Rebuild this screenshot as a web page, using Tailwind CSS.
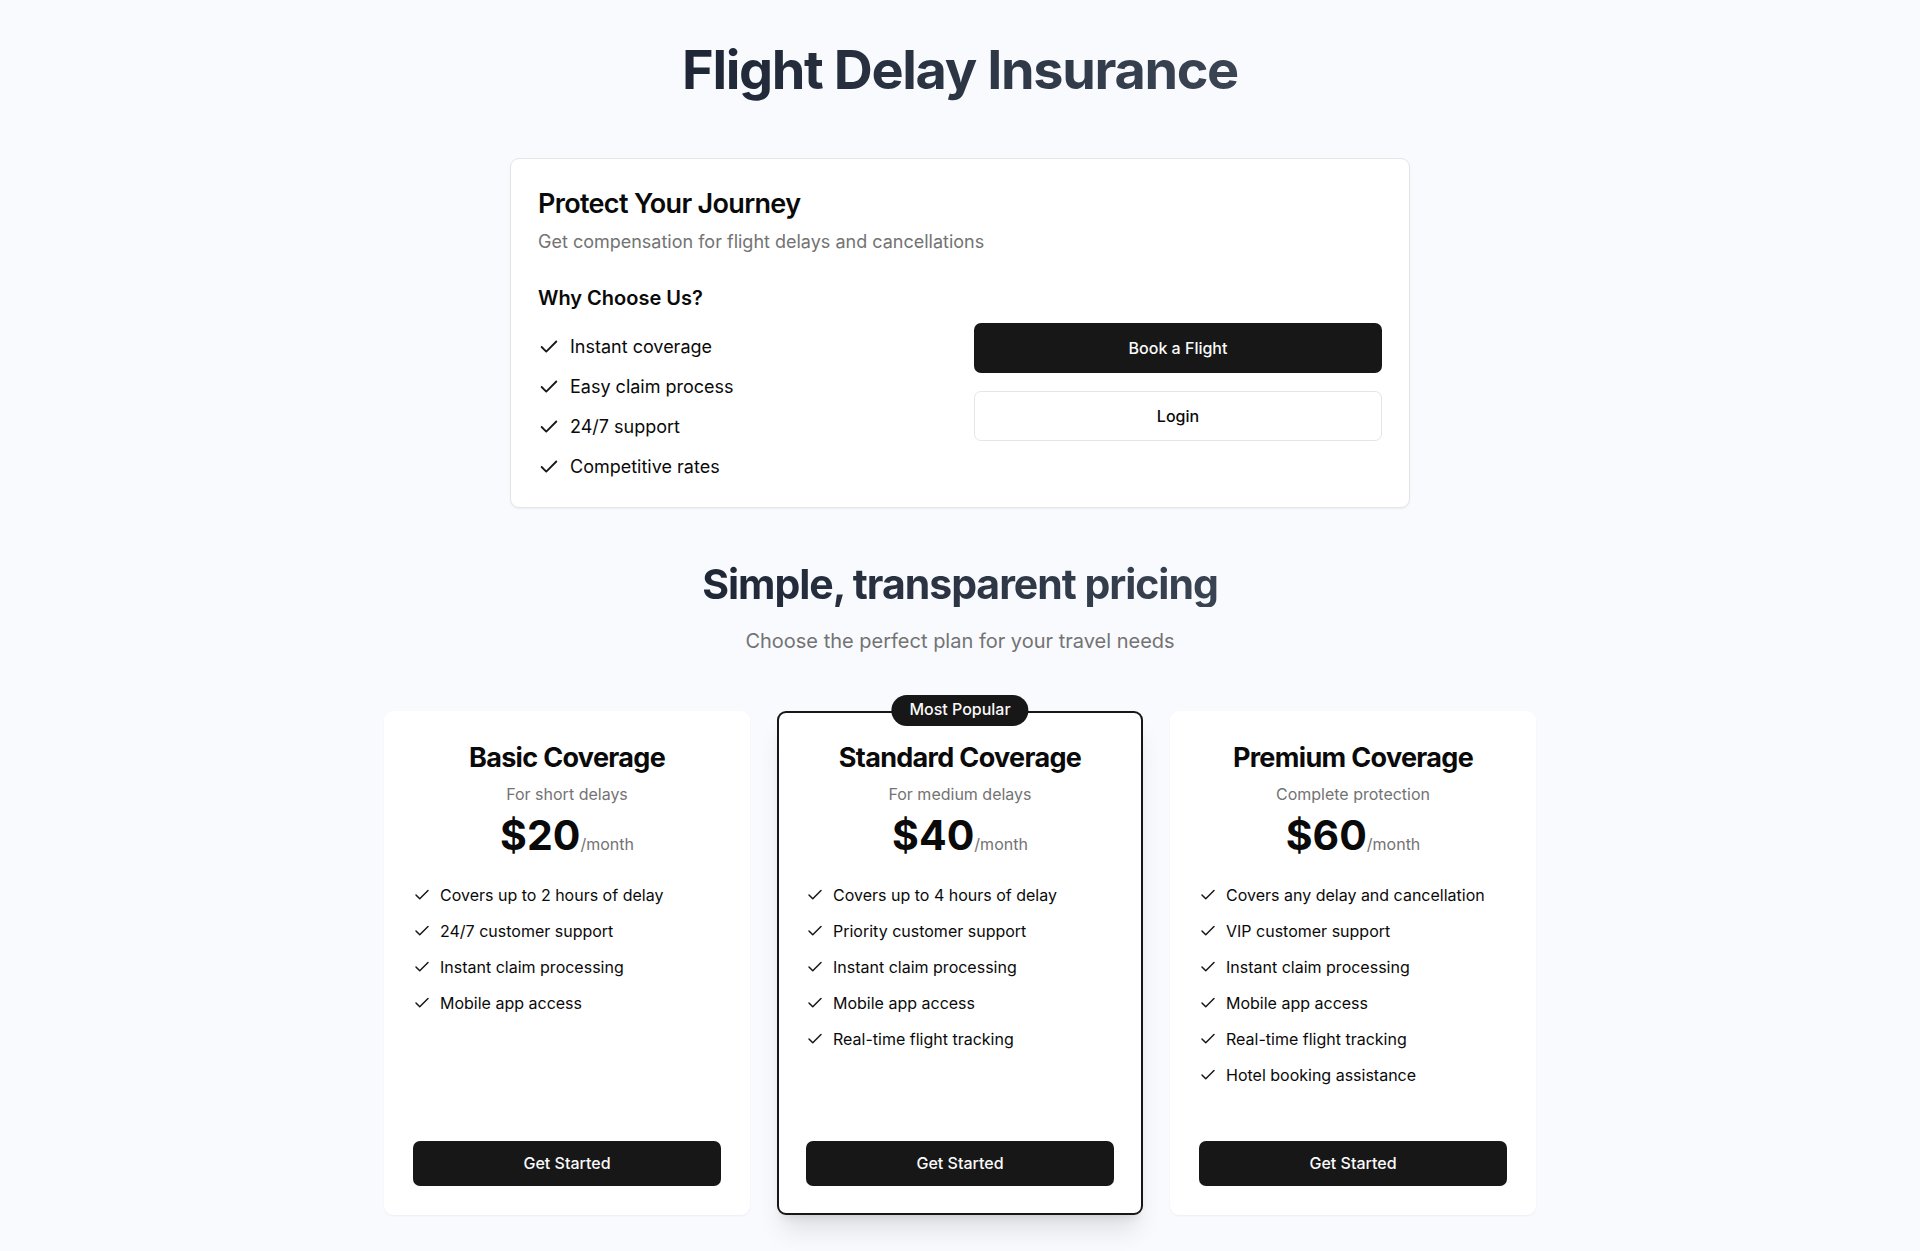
<!DOCTYPE html>
<html lang="en">
<head>
<meta charset="utf-8">
<meta name="viewport" content="width=device-width, initial-scale=1">
<title>Flight Delay Insurance</title>
<script src="https://cdn.jsdelivr.net/npm/@tailwindcss/browser@4"></script>
</head>
<body class="bg-white font-['Inter',sans-serif] text-[18px] leading-[27px] text-neutral-950">
<svg class="hidden" aria-hidden="true"><symbol id="check" viewBox="0 0 24 24" fill="none" stroke="currentColor" stroke-width="2" stroke-linecap="round" stroke-linejoin="round"><path d="M20 6 9 17l-5-5"/></symbol></svg>
<div class="bg-[#f8fafe] py-9">
  <main class="mx-auto max-w-[1152px]">
    <h1 class="bg-linear-to-r from-[#111827] to-[#4b5563] bg-clip-text text-center text-[54px] leading-[68px] font-bold tracking-tight text-transparent">Flight Delay Insurance</h1>

    <section class="mx-auto mt-[54px] max-w-[900px] rounded-[9px] border border-neutral-200 bg-white p-[27px] shadow-xs">
      <h2 class="text-[27px] leading-9 font-semibold tracking-tight">Protect Your Journey</h2>
      <p class="mt-1.5 text-neutral-500">Get compensation for flight delays and cancellations</p>
      <div class="mt-[29px] grid items-center gap-7 md:grid-cols-2">
        <div>
          <h3 class="text-[20px] leading-7 font-semibold">Why Choose Us?</h3>
          <ul class="mt-[21px] flex flex-col gap-[13px]">
            <li class="flex items-center gap-2.5"><svg class="size-[22px] text-neutral-900"><use href="#check"/></svg>Instant coverage</li>
            <li class="flex items-center gap-2.5"><svg class="size-[22px] text-neutral-900"><use href="#check"/></svg>Easy claim process</li>
            <li class="flex items-center gap-2.5"><svg class="size-[22px] text-neutral-900"><use href="#check"/></svg>24/7 support</li>
            <li class="flex items-center gap-2.5"><svg class="size-[22px] text-neutral-900"><use href="#check"/></svg>Competitive rates</li>
          </ul>
        </div>
        <div class="flex flex-col gap-[18px]">
          <button class="h-[50px] rounded-[7px] bg-neutral-900 text-[16px] font-medium text-neutral-50">Book a Flight</button>
          <button class="h-[50px] rounded-[7px] border border-neutral-200 bg-white text-[16px] font-medium">Login</button>
        </div>
      </div>
    </section>

    <section class="mt-[54px]">
      <h2 class="bg-linear-to-r from-[#111827] to-[#4b5563] bg-clip-text text-center text-[41px] leading-[45px] font-bold tracking-tight text-transparent">Simple, transparent pricing</h2>
      <p class="mt-[18px] text-center text-[20px] leading-8 text-neutral-500">Choose the perfect plan for your travel needs</p>

      <div class="mt-[54px] grid gap-[27px] md:grid-cols-3">
        <article class="flex flex-col rounded-[9px] border-2 border-white bg-white p-[27px] shadow-xs">
          <h3 class="text-center text-[27px] leading-9 font-bold tracking-tight">Basic Coverage</h3>
          <p class="mt-1.5 text-center text-[16px] leading-6 text-neutral-500">For short delays</p>
          <p class="mt-[7px] text-center text-[16px] leading-[45px] text-neutral-500"><span class="text-[41px] font-bold text-neutral-950">$20</span>/month</p>
          <ul class="mt-4 mb-[54px] flex flex-col gap-3 text-[16px] leading-6">
            <li class="flex items-center gap-[9px]"><svg class="size-[18px] text-neutral-900"><use href="#check"/></svg>Covers up to 2 hours of delay</li>
            <li class="flex items-center gap-[9px]"><svg class="size-[18px] text-neutral-900"><use href="#check"/></svg>24/7 customer support</li>
            <li class="flex items-center gap-[9px]"><svg class="size-[18px] text-neutral-900"><use href="#check"/></svg>Instant claim processing</li>
            <li class="flex items-center gap-[9px]"><svg class="size-[18px] text-neutral-900"><use href="#check"/></svg>Mobile app access</li>
          </ul>
          <button class="mt-auto h-[45px] rounded-[7px] bg-neutral-900 text-[16px] font-medium text-neutral-50">Get Started</button>
        </article>

        <article class="relative flex flex-col rounded-[9px] border-2 border-neutral-900 bg-white p-[27px] shadow-xl">
          <span class="absolute -top-[18px] left-1/2 -translate-x-1/2 rounded-full bg-neutral-900 px-[18px] pt-[3px] pb-[5px] text-[16px] leading-[23px] font-medium whitespace-nowrap text-neutral-50">Most Popular</span>
          <h3 class="text-center text-[27px] leading-9 font-bold tracking-tight">Standard Coverage</h3>
          <p class="mt-1.5 text-center text-[16px] leading-6 text-neutral-500">For medium delays</p>
          <p class="mt-[7px] text-center text-[16px] leading-[45px] text-neutral-500"><span class="text-[41px] font-bold text-neutral-950">$40</span>/month</p>
          <ul class="mt-4 mb-[54px] flex flex-col gap-3 text-[16px] leading-6">
            <li class="flex items-center gap-[9px]"><svg class="size-[18px] text-neutral-900"><use href="#check"/></svg>Covers up to 4 hours of delay</li>
            <li class="flex items-center gap-[9px]"><svg class="size-[18px] text-neutral-900"><use href="#check"/></svg>Priority customer support</li>
            <li class="flex items-center gap-[9px]"><svg class="size-[18px] text-neutral-900"><use href="#check"/></svg>Instant claim processing</li>
            <li class="flex items-center gap-[9px]"><svg class="size-[18px] text-neutral-900"><use href="#check"/></svg>Mobile app access</li>
            <li class="flex items-center gap-[9px]"><svg class="size-[18px] text-neutral-900"><use href="#check"/></svg>Real-time flight tracking</li>
          </ul>
          <button class="mt-auto h-[45px] rounded-[7px] bg-neutral-900 text-[16px] font-medium text-neutral-50">Get Started</button>
        </article>

        <article class="flex flex-col rounded-[9px] border-2 border-white bg-white p-[27px] shadow-xs">
          <h3 class="text-center text-[27px] leading-9 font-bold tracking-tight">Premium Coverage</h3>
          <p class="mt-1.5 text-center text-[16px] leading-6 text-neutral-500">Complete protection</p>
          <p class="mt-[7px] text-center text-[16px] leading-[45px] text-neutral-500"><span class="text-[41px] font-bold text-neutral-950">$60</span>/month</p>
          <ul class="mt-4 mb-[54px] flex flex-col gap-3 text-[16px] leading-6">
            <li class="flex items-center gap-[9px]"><svg class="size-[18px] text-neutral-900"><use href="#check"/></svg>Covers any delay and cancellation</li>
            <li class="flex items-center gap-[9px]"><svg class="size-[18px] text-neutral-900"><use href="#check"/></svg>VIP customer support</li>
            <li class="flex items-center gap-[9px]"><svg class="size-[18px] text-neutral-900"><use href="#check"/></svg>Instant claim processing</li>
            <li class="flex items-center gap-[9px]"><svg class="size-[18px] text-neutral-900"><use href="#check"/></svg>Mobile app access</li>
            <li class="flex items-center gap-[9px]"><svg class="size-[18px] text-neutral-900"><use href="#check"/></svg>Real-time flight tracking</li>
            <li class="flex items-center gap-[9px]"><svg class="size-[18px] text-neutral-900"><use href="#check"/></svg>Hotel booking assistance</li>
          </ul>
          <button class="mt-auto h-[45px] rounded-[7px] bg-neutral-900 text-[16px] font-medium text-neutral-50">Get Started</button>
        </article>
      </div>
    </section>
  </main>
</div>
</body>
</html>
